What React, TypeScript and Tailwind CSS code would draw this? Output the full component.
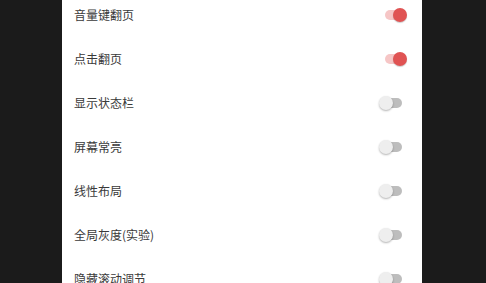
const rows: { label: string; on: boolean }[] = [
  { label: "音量键翻页", on: true },
  { label: "点击翻页", on: true },
  { label: "显示状态栏", on: false },
  { label: "屏幕常亮", on: false },
  { label: "线性布局", on: false },
  { label: "全局灰度(实验)", on: false },
  { label: "隐藏滚动调节", on: false },
];

function Toggle({ on }: { on: boolean }) {
  return (
    <div className="relative h-[14px] w-[28px]">
      <div
        className={
          on
            ? "absolute left-[6px] top-[2px] h-[10px] w-[17px] rounded-full bg-[#f6c6c6]"
            : "absolute left-[7px] top-[2px] h-[10px] w-[16px] rounded-full bg-[#bdbdbd]"
        }
      />
      <div
        className={
          on
            ? "absolute left-[14px] top-0 h-[14px] w-[14px] rounded-full bg-[#e05353] shadow-[0_1px_1px_rgba(0,0,0,0.2)]"
            : "absolute left-0 top-0 h-[14px] w-[14px] rounded-full bg-[#eeeeee] shadow-[0_1px_2px_rgba(0,0,0,0.3)]"
        }
      />
    </div>
  );
}

export default function App() {
  return (
    <div className="flex h-[283px] w-full overflow-hidden bg-[#1b1b1b]">
      <div className="ml-[62px] w-[360px] bg-white">
        <div className="-mt-[7px] flex flex-col">
          {rows.map((r) => (
            <div
              key={r.label}
              className="flex h-[44px] items-center justify-between pl-[12px] pr-[15px]"
            >
              <span className="text-[12px] text-[#3a3a3a] [font-family:'Noto_Sans_CJK_SC',sans-serif]">
                {r.label}
              </span>
              <Toggle on={r.on} />
            </div>
          ))}
        </div>
      </div>
    </div>
  );
}
